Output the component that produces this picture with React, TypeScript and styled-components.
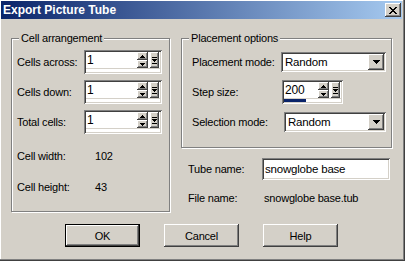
import React from 'react';
import styled, { createGlobalStyle, css } from 'styled-components';

/* Constants =========================================================== */
const FACE = '#d4d0c8';

const GlobalStyle = createGlobalStyle`
    html, body {
        margin: 0;
        padding: 0;
        background: ${FACE};
    }
    body {
        font-family: 'Liberation Sans', Arial, sans-serif;
        font-size: 11px;
        letter-spacing: -0.2px;
        color: #000;
    }
`;

const raised = css`
    box-shadow: inset -1px -1px #404040, inset 1px 1px #fff, inset -2px -2px #808080,
        inset 2px 2px ${FACE};
`;
const sunken = css`
    box-shadow: inset 1px 1px #808080, inset -1px -1px #fff, inset 2px 2px #404040,
        inset -2px -2px ${FACE};
`;

/* Window =========================================================== */
const Window = styled.div`
    width: 405px;
    height: 261px;
    box-sizing: border-box;
    padding: 1px 3px 3px 1px;
    background: ${FACE};
    box-shadow: inset -1px -1px #404040, inset -2px -2px #808080, inset 1px 1px #fff;
    display: flex;
    flex-direction: column;
`;
const TitleBar = styled.div`
    height: 18px;
    display: flex;
    align-items: center;
    justify-content: space-between;
    padding: 0 1px 0 2px;
    background: linear-gradient(to right, #0a246a, #a6caf0);
`;
const TitleText = styled.span`
    color: #fff;
    font-weight: bold;
    font-size: 12px;
    letter-spacing: 0;
`;
const CloseButton = styled.div`
    width: 16px;
    height: 14px;
    display: flex;
    align-items: center;
    justify-content: center;
    background: ${FACE};
    ${raised};
`;
const Body = styled.div`
    padding: 19px 10px 0 10px;
    display: flex;
    flex-direction: column;
`;
const Columns = styled.div`
    display: flex;
    align-items: flex-start;
    gap: 11px;
`;
const RightCol = styled.div`
    display: flex;
    flex-direction: column;
`;

/* Group box =========================================================== */
const GroupBox = styled.div<{ $w: number; $h: number }>`
    width: ${(p) => p.$w}px;
    height: ${(p) => p.$h}px;
    box-sizing: border-box;
    border: 1px solid #808080;
    box-shadow: 1px 1px 0 #fff, inset 1px 1px 0 #fff;
`;
const Legend = styled.span`
    display: block;
    width: fit-content;
    height: 13px;
    line-height: 13px;
    margin: -7px 0 0 7px;
    padding: 0 2px;
    background: ${FACE};
`;
const GroupBody = styled.div<{ $pad: number }>`
    padding: 2px 0 0 ${(p) => p.$pad}px;
    display: flex;
    flex-direction: column;
`;
const FieldRow = styled.div<{ $h?: number; $top?: number; $pad?: number }>`
    height: ${(p) => p.$h ?? 30}px;
    margin-top: ${(p) => p.$top ?? 0}px;
    padding-left: ${(p) => p.$pad ?? 0}px;
    display: flex;
    align-items: center;
`;
const Label = styled.span<{ $w: number }>`
    width: ${(p) => p.$w}px;
    flex: none;
`;

/* Spin box =========================================================== */
const SpinFrame = styled.div<{ $w: number }>`
    width: ${(p) => p.$w}px;
    height: 24px;
    box-sizing: border-box;
    padding: 2px;
    background: #fff;
    ${sunken};
    display: flex;
    flex-direction: column;
`;
const SpinTop = styled.div`
    height: 16px;
    display: flex;
`;
const SpinText = styled.div`
    flex: 1;
    line-height: 16px;
    padding-left: 1px;
    font-size: 12px;
`;
const SpinArrows = styled.div`
    width: 11px;
    display: flex;
    flex-direction: column;
`;
const SpinArrow = styled.div`
    height: 8px;
    display: flex;
    align-items: center;
    justify-content: center;
    background: ${FACE};
    ${raised};
`;
const PopupButton = styled.div`
    width: 9px;
    margin: 0 1px 0 2px;
    display: flex;
    align-items: center;
    justify-content: center;
    background: ${FACE};
    ${raised};
`;
const SpinTrack = styled.div`
    height: 3px;
    border-top: 1px solid ${FACE};
    background: #fff;
`;
const SpinFill = styled.div`
    height: 100%;
    background: #0a246a;
`;

/* Combo / input =========================================================== */
const ComboFrame = styled.div<{ $w: number }>`
    width: ${(p) => p.$w}px;
    height: 20px;
    box-sizing: border-box;
    padding: 2px;
    background: #fff;
    ${sunken};
    display: flex;
`;
const ComboText = styled.div`
    flex: 1;
    line-height: 16px;
    padding-left: 2px;
    font-size: 11.5px;
`;
const DropButton = styled.div`
    width: 16px;
    height: 16px;
    display: flex;
    align-items: center;
    justify-content: center;
    background: ${FACE};
    ${raised};
`;
const TextInput = styled.div<{ $w: number }>`
    width: ${(p) => p.$w}px;
    height: 22px;
    box-sizing: border-box;
    padding: 2px 2px 2px 3px;
    line-height: 18px;
    background: #fff;
    font-size: 11.5px;
    ${sunken};
`;

/* Buttons =========================================================== */
const ButtonRow = styled.div`
    margin-top: 12px;
    display: flex;
    justify-content: center;
    gap: 24px;
`;
const Button = styled.div<{ $default?: boolean }>`
    width: 75px;
    height: 23px;
    box-sizing: border-box;
    display: flex;
    align-items: center;
    justify-content: center;
    background: ${FACE};
    ${(p) => p.$default && 'border: 1px solid #000;'};
    ${raised};
`;

/* Glyphs =========================================================== */
const Tri = ({ up }: { up?: boolean }) => (
    <svg width="5" height="3" viewBox="0 0 5 3" shapeRendering="crispEdges">
        {up ? (
            <path d="M2 0h1v1h1v1h1v1H0V2h1V1h1z" fill="#000" />
        ) : (
            <path d="M0 0h5v1H4v1H3v1H2V2H1V1H0z" fill="#000" />
        )}
    </svg>
);
const PopupGlyph = () => (
    <svg width="5" height="7" viewBox="0 0 5 7" shapeRendering="crispEdges">
        <path d="M0 0h5v1H0zM0 2h5v1H4v1H3v1H2V4H1V3H0zM0 6h5v1H0z" fill="#000" />
    </svg>
);
const ComboArrow = () => (
    <svg width="7" height="4" viewBox="0 0 7 4" shapeRendering="crispEdges">
        <path d="M0 0h7v1H6v1H5v1H4v1H3V3H2V2H1V1H0z" fill="#000" />
    </svg>
);
const CloseGlyph = () => (
    <svg width="8" height="7" viewBox="0 0 8 7" shapeRendering="crispEdges">
        <path
            d="M0 0h2v1h1v1h2V1h1V0h2v1H7v1H6v1H5v1h1v1h1v1h1v1H6V6H5V5H3v1H2v1H0V6h1V5h1V4h1V3H2V2H1V1H0z"
            fill="#000"
        />
    </svg>
);

/* Controls =========================================================== */
function SpinBox({ value, width, fill = 0 }: { value: string; width: number; fill?: number }) {
    return (
        <SpinFrame $w={width}>
            <SpinTop>
                <SpinText>{value}</SpinText>
                <SpinArrows>
                    <SpinArrow>
                        <Tri up />
                    </SpinArrow>
                    <SpinArrow>
                        <Tri />
                    </SpinArrow>
                </SpinArrows>
                <PopupButton>
                    <PopupGlyph />
                </PopupButton>
            </SpinTop>
            <SpinTrack>
                <SpinFill style={{ width: `${fill * 100}%` }} />
            </SpinTrack>
        </SpinFrame>
    );
}

function Combo({ value, width }: { value: string; width: number }) {
    return (
        <ComboFrame $w={width}>
            <ComboText>{value}</ComboText>
            <DropButton>
                <ComboArrow />
            </DropButton>
        </ComboFrame>
    );
}

/* <App/> =========================================================== */
export default function App() {
    return (
        <>
            <GlobalStyle />
            <Window>
                <TitleBar>
                    <TitleText>Export Picture Tube</TitleText>
                    <CloseButton>
                        <CloseGlyph />
                    </CloseButton>
                </TitleBar>
                <Body>
                    <Columns>
                        <GroupBox $w={159} $h={174}>
                            <Legend>Cell arrangement</Legend>
                            <GroupBody $pad={5}>
                                <FieldRow>
                                    <Label $w={67}>Cells across:</Label>
                                    <SpinBox value="1" width={78} />
                                </FieldRow>
                                <FieldRow>
                                    <Label $w={67}>Cells down:</Label>
                                    <SpinBox value="1" width={78} />
                                </FieldRow>
                                <FieldRow>
                                    <Label $w={67}>Total cells:</Label>
                                    <SpinBox value="1" width={78} />
                                </FieldRow>
                                <FieldRow $h={31} $top={3}>
                                    <Label $w={78}>Cell width:</Label>
                                    <span>102</span>
                                </FieldRow>
                                <FieldRow $h={31}>
                                    <Label $w={78}>Cell height:</Label>
                                    <span>43</span>
                                </FieldRow>
                            </GroupBody>
                        </GroupBox>
                        <RightCol>
                            <GroupBox $w={211} $h={110}>
                                <Legend>Placement options</Legend>
                                <GroupBody $pad={10}>
                                    <FieldRow>
                                        <Label $w={89}>Placement mode:</Label>
                                        <Combo value="Random" width={105} />
                                    </FieldRow>
                                    <FieldRow>
                                        <Label $w={90}>Step size:</Label>
                                        <SpinBox value="200" width={61} fill={0.38} />
                                    </FieldRow>
                                    <FieldRow>
                                        <Label $w={92}>Selection mode:</Label>
                                        <Combo value="Random" width={102} />
                                    </FieldRow>
                                </GroupBody>
                            </GroupBox>
                            <FieldRow $top={6} $pad={7}>
                                <Label $w={74}>Tube name:</Label>
                                <TextInput $w={128}>snowglobe base</TextInput>
                            </FieldRow>
                            <FieldRow $h={28} $pad={7}>
                                <Label $w={76}>File name:</Label>
                                <span>snowglobe base.tub</span>
                            </FieldRow>
                        </RightCol>
                    </Columns>
                    <ButtonRow>
                        <Button $default>OK</Button>
                        <Button>Cancel</Button>
                        <Button>Help</Button>
                    </ButtonRow>
                </Body>
            </Window>
        </>
    );
}
